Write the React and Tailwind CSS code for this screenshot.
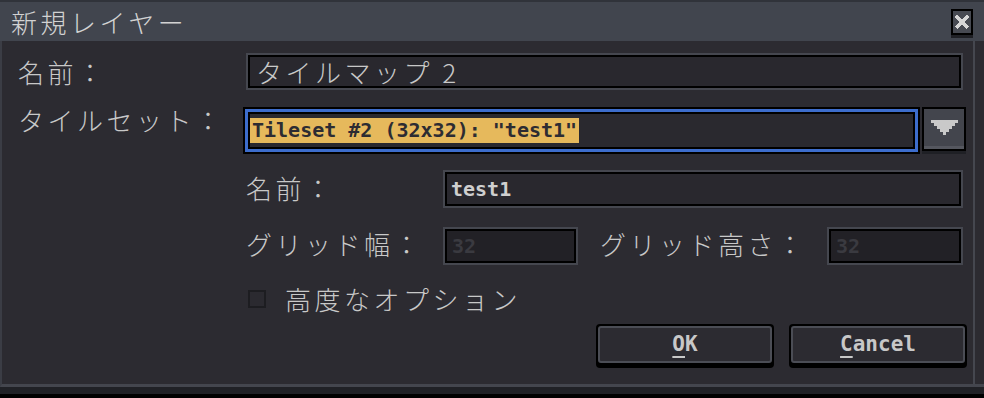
import React from 'react'

const jp = "font-['Noto_Sans_CJK_JP','Noto_Sans',sans-serif] font-light"
const px = "font-['DejaVu_Sans_Mono',monospace]"

function Field({ className = '', inner = '', children }) {
  return (
    <div className={`border-2 border-[#45474f] ${className}`}>
      <div className={`flex h-full items-center border-2 border-black ${inner}`}>{children}</div>
    </div>
  )
}

function Label({ className = '', children }) {
  return (
    <div className={`${jp} shrink-0 text-[26px] leading-[30px] tracking-[3.5px] text-[#c8c8c8] ${className}`}>
      {children}
    </div>
  )
}

function Button({ children }) {
  return (
    <div className="w-[178px] rounded-[4px] bg-black p-[2px] pb-[5px]">
      <div className={`${px} flex h-[37px] items-center justify-center rounded-[3px] border-2 border-[#4b4d55] bg-[#2c2b31] text-[21px] font-bold text-[#c8c8c8]`}>
        {children}
      </div>
    </div>
  )
}

export default function App() {
  return (
    <div className="h-[398px] w-[984px] overflow-hidden bg-black">
      <div className="flex h-[394px] flex-col">
        {/* title bar */}
        <div className="flex h-[41px] shrink-0 items-center justify-between border-t-2 border-[#30333a] bg-[#41454e] pl-[11px] pr-[11px]">
          <div className={`${jp} text-[26px] leading-[30px] tracking-[3.5px] text-[#d2d2d2]`}>新規レイヤー</div>
          <div className="mt-[3px] flex flex-col">
            <div className="flex h-[26px] w-[22px] items-center justify-center border-2 border-black bg-[#474a52]">
              <svg width="14" height="14" viewBox="0 0 14 14" shapeRendering="crispEdges">
                <path d="M1 1L13 13M13 1L1 13" stroke="#d6d6d6" strokeWidth="3" />
              </svg>
            </div>
            <div className="h-[3px] w-[22px] bg-[#1f2025]" />
          </div>
        </div>

        {/* body */}
        <div className="flex flex-1 bg-[#2c2b31]">
          <div className="flex flex-1 flex-col border-b-[3px] border-l-2 border-r-2 border-b-[#44464e] border-l-[#3b3d45] border-r-[#45474f] pl-[16px] pr-[10px]">
            {/* name */}
            <div className="mt-[12px] flex items-start">
              <Label className="mt-[4px] w-[228px]">名前：</Label>
              <Field className="h-[37px] flex-1" inner="bg-[#29282e] pl-[6px]">
                <span className={`${jp} text-[26px] leading-[30px] tracking-[3.5px] text-[#c8c8c8]`}>タイルマップ 2</span>
              </Field>
            </div>

            {/* tileset */}
            <div className="mt-[17px] flex items-start">
              <Label className="-mt-[2px] w-[225px]">タイルセット：</Label>
              <div className="h-[47px] flex-1 border-2 border-black">
                <div className="h-full border-[3px] border-[#3d6dcc]">
                  <div className="flex h-full items-center border-2 border-black bg-[#2a292f]">
                    <span className={`${px} bg-[#e6b95c] px-[2px] text-[20px] font-bold leading-[25px] text-[#2d2c32]`}>
                      Tileset #2 (32x32): "test1"
                    </span>
                  </div>
                </div>
              </div>
              <div className="-mr-[3px] ml-[2px] flex flex-col">
                <div className="flex h-[44px] w-[44px] flex-col border-2 border-black bg-[#43454d]">
                  <div className="flex flex-1 items-center justify-center">
                    <svg width="27" height="15" viewBox="0 0 27 15" shapeRendering="crispEdges">
                      <polygon
                        points="0,0 27,0 27,3 24,3 24,6 21,6 21,9 18,9 18,12 15,12 15,15 12,15 12,12 9,12 9,9 6,9 6,6 3,6 3,3 0,3"
                        fill="#c9c9c9"
                      />
                    </svg>
                  </div>
                  <div className="h-[3px] bg-[#55575f]" />
                </div>
                <div className="h-[3px] w-[44px] bg-[#1f2025]" />
              </div>
            </div>

            {/* tileset name */}
            <div className="mt-[16px] flex items-start pl-[228px]">
              <Label className="mt-[3px] w-[197px]">名前：</Label>
              <Field className="h-[38px] flex-1" inner="bg-[#29282e] pl-[4px]">
                <span className={`${px} text-[20px] font-bold leading-[25px] text-[#cfcfcf]`}>test1</span>
              </Field>
            </div>

            {/* grid */}
            <div className="mt-[19px] flex items-start pl-[228px]">
              <Label className="mt-[2px] w-[197px]">グリッド幅：</Label>
              <Field className="h-[38px] w-[135px]" inner="bg-[#222126] pl-[5px]">
                <span className={`${px} text-[20px] font-bold leading-[25px] text-[#3a3a40]`}>32</span>
              </Field>
              <Label className="ml-[22px] mt-[2px] w-[227px]">グリッド高さ：</Label>
              <Field className="h-[38px] flex-1" inner="bg-[#222126] pl-[5px]">
                <span className={`${px} text-[20px] font-bold leading-[25px] text-[#3a3a40]`}>32</span>
              </Field>
            </div>

            {/* advanced */}
            <div className="mt-[19px] flex items-center pl-[230px]">
              <div className="h-[18px] w-[18px] border-2 border-[#1d1d21] bg-[#2b2a30]" />
              <Label className="ml-[19px]">高度なオプション</Label>
            </div>

            {/* buttons */}
            <div className="-mr-[4px] mt-[10px] flex justify-end gap-[15px]">
              <Button>
                <span className="underline decoration-2 underline-offset-[5px]">O</span>K
              </Button>
              <Button>
                <span className="underline decoration-2 underline-offset-[5px]">C</span>ancel
              </Button>
            </div>
          </div>
          <div className="w-[9px] border-b-[3px] border-[#44464e]" />
        </div>
        <div className="h-[7px] shrink-0 bg-[#202126]" />
      </div>
    </div>
  )
}
